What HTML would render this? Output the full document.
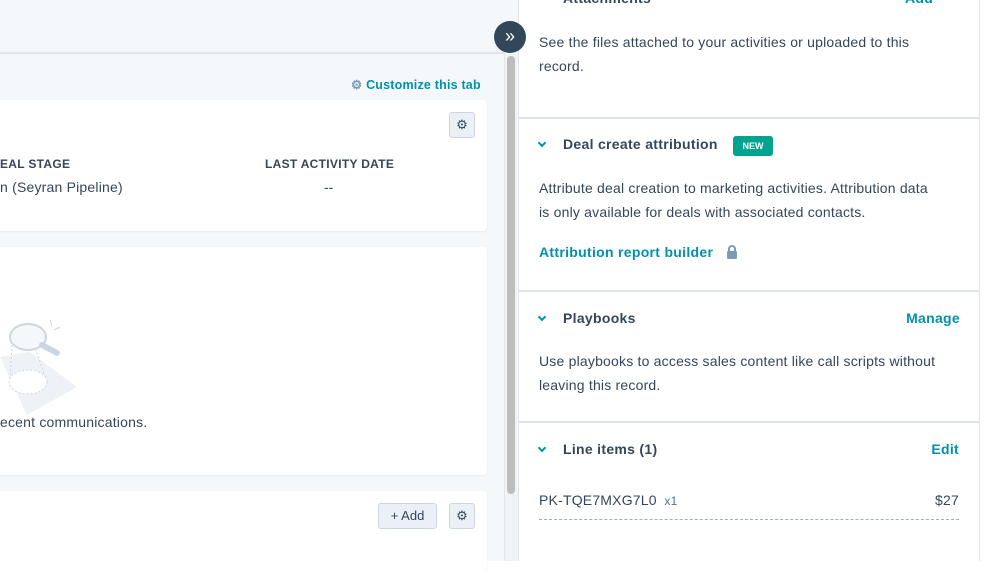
<!DOCTYPE html>
<html><head><meta charset="utf-8"><style>
*{box-sizing:border-box;margin:0;padding:0}
body{width:997px;height:561px;overflow:hidden;background:#fff;font-family:"Liberation Sans",sans-serif;color:#33475b;position:relative}
.abs{position:absolute}
.left{left:0;top:0;width:518px;height:561px;background:#f5f8fa}
.card{position:absolute;left:0;width:487px;background:#fff;border-radius:0 4px 4px 0;box-shadow:0 1px 2px rgba(0,0,0,.06)}
.btn{position:absolute;background:#eaf0f6;border:1px solid #cbd6e2;border-radius:3px;color:#33475b;font-size:13px;text-align:center}
.right{left:518px;top:0;width:462px;height:561px;border-left:1px solid #dfe3eb;border-right:1px solid #dfe3eb;background:#fff}
.sec{position:absolute;left:0;width:461px;border-bottom:2px solid #dfe3eb}
.t{position:absolute;font-size:14px;line-height:24px;color:#33475b;letter-spacing:.2px}
.h{position:absolute;font-size:14px;font-weight:bold;color:#33475b;letter-spacing:.3px}
.link{position:absolute;font-size:14px;font-weight:bold;color:#0091ae;letter-spacing:.3px}
.chev{position:absolute;left:20px;width:6px;height:6px;border-right:2px solid #0091ae;border-bottom:2px solid #0091ae;transform:rotate(45deg)}
</style></head><body>
<div class="abs left">
 <div class="abs" style="left:0;top:52px;width:505px;height:2px;background:#dfe3eb"></div>
 <div class="abs" style="left:351px;top:77px;font-size:12.5px;font-weight:bold;color:#0091ae;letter-spacing:.2px"><span style="color:#7c98b6">⚙</span> Customize this tab</div>
 <div class="card" style="top:100px;height:131px">
  <div class="btn" style="left:449px;top:12px;width:26px;height:26px;line-height:24px">⚙</div>
  <div class="abs" style="left:0;top:57px;font-size:12px;font-weight:bold;letter-spacing:.3px">EAL STAGE</div>
  <div class="abs" style="left:0;top:79px;font-size:14px;letter-spacing:.2px">n (Seyran Pipeline)</div>
  <div class="abs" style="left:265px;top:57px;font-size:12px;font-weight:bold;letter-spacing:.3px">LAST ACTIVITY DATE</div>
  <div class="abs" style="left:324px;top:79px;font-size:14px">--</div>
 </div>
 <div class="card" style="top:247px;height:228px">
  <svg class="abs" style="left:0;top:70px" width="80" height="100" viewBox="0 0 80 100">
   <polygon points="0,40 27,98 77,70 30,35" fill="#eef2f6"/>
   <ellipse cx="28" cy="65" rx="19" ry="12" fill="#fff" stroke="#cbd6e2" stroke-dasharray="2 2"/>
   <line x1="12" y1="28" x2="10" y2="62" stroke="#cbd6e2" stroke-dasharray="2 2"/>
   <line x1="34" y1="28" x2="46" y2="62" stroke="#cbd6e2" stroke-dasharray="2 2"/>
   <ellipse cx="28" cy="20" rx="18" ry="13" fill="#f5f8fa" stroke="#cbd6e2" stroke-width="2"/>
   <line x1="42" y1="28" x2="57" y2="36" stroke="#cbd6e2" stroke-width="6" stroke-linecap="round"/>
   <line x1="50" y1="3" x2="52" y2="9" stroke="#cbd6e2"/><line x1="60" y1="10" x2="54" y2="13" stroke="#cbd6e2"/>
  </svg>
  <div class="abs" style="left:0;top:167px;font-size:14px;letter-spacing:.2px">ecent communications.</div>
 </div>
 <div class="card" style="top:491px;height:80px">
  <div class="btn" style="left:378px;top:12px;width:59px;height:26px;line-height:24px">+ Add</div>
  <div class="btn" style="left:449px;top:12px;width:26px;height:26px;line-height:24px">⚙</div>
 </div>
 <div class="abs" style="left:504px;top:54px;width:13px;height:507px;background:#f0f3f6;border-left:1px solid #e5e8eb"></div>
 <div class="abs" style="left:507px;top:56px;width:8px;height:438px;background:#bdbdbd;border-radius:4px"></div>
</div>
<div class="abs right">
 <div class="sec" style="top:0;height:119px">
  <div class="h" style="left:44px;top:-10px">Attachments</div>
  <div class="link" style="left:386px;top:-10px">Add</div>
  <div class="t" style="left:20px;top:30px;width:395px">See the files attached to your activities or uploaded to this record.</div>
 </div>
 <div class="sec" style="top:119px;height:173px">
  <div class="chev" style="top:21px"></div>
  <div class="h" style="left:44px;top:17px">Deal create attribution</div>
  <div class="abs" style="left:214px;top:17px;width:40px;height:20px;background:#00a38d;color:#fff;font-size:9px;font-weight:bold;border-radius:3px;text-align:center;line-height:20px">NEW</div>
  <div class="t" style="left:20px;top:57px;width:430px">Attribute deal creation to marketing activities. Attribution data<br>is only available for deals with associated contacts.</div>
  <div class="link" style="left:20px;top:125px">Attribution report builder</div>
  <svg class="abs" style="left:207px;top:126px" width="12" height="14" viewBox="0 0 12 14"><path d="M3 6V4a3 3 0 0 1 6 0v2" fill="none" stroke="#7c98b6" stroke-width="2"/><rect x="1" y="6" width="10" height="8" rx="1.5" fill="#7c98b6"/></svg>
 </div>
 <div class="sec" style="top:292px;height:131px">
  <div class="chev" style="top:22px"></div>
  <div class="h" style="left:44px;top:18px">Playbooks</div>
  <div class="link" style="right:20px;top:18px">Manage</div>
  <div class="t" style="left:20px;top:57px;width:430px">Use playbooks to access sales content like call scripts without leaving this record.</div>
 </div>
 <div class="chev" style="top:445px"></div>
 <div class="h" style="left:44px;top:441px">Line items (1)</div>
 <div class="link" style="right:20px;top:441px">Edit</div>
 <div class="t" style="left:20px;top:488px">PK-TQE7MXG7L0 <span style="font-size:12px;color:#516f90">&nbsp;x1</span></div>
 <div class="t" style="right:20px;top:488px">$27</div>
 <div class="abs" style="left:20px;top:519px;width:420px;border-top:1px dashed #99afc4"></div>
</div>
<div class="abs" style="left:494px;top:21px;width:32px;height:32px;border-radius:50%;background:#33475b;color:#fff;font-size:18px;text-align:center;line-height:30px">»</div>
</body></html>
